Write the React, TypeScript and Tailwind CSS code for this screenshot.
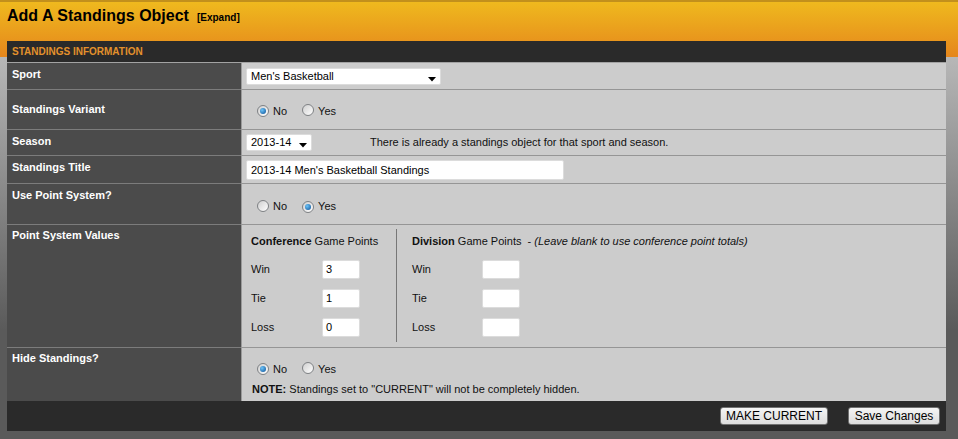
import React from 'react';

const Radio = ({ checked = false }: { checked?: boolean }) => (
  <span className="inline-flex h-[12px] w-[12px] shrink-0 items-center justify-center rounded-full border border-[#7e8184] bg-[linear-gradient(135deg,#cfcfcf,#ffffff)]">
    {checked && (
      <span className="h-[6px] w-[6px] rounded-full bg-[radial-gradient(circle_at_35%_35%,#6cc4f8,#0b4f96)]" />
    )}
  </span>
);

const YesNo = ({ yes = false }: { yes?: boolean }) => (
  <div className="flex h-[12px] items-center pl-[15px]">
    <Radio checked={!yes} />
    <span className="ml-[4px]">No</span>
    <span className="ml-[15px]">
      <Radio checked={yes} />
    </span>
    <span className="ml-[4px]">Yes</span>
  </div>
);

const Select = ({ value, width }: { value: string; width: string }) => (
  <div
    className={`flex h-[17px] items-center justify-between rounded-[2px] border border-[#dcdcdc] bg-white pl-[4px] pr-[4px] text-[11px] text-black ${width}`}
  >
    <span>{value}</span>
    <svg width="8" height="5" viewBox="0 0 8 5" className="mt-[5px]">
      <path d="M0 0h8L4 4.5z" fill="#000" />
    </svg>
  </div>
);

const PointInput = ({ value = '' }: { value?: string }) => (
  <div className="flex h-[19px] w-[38px] items-center rounded-[2px] border border-[#dcdcdc] bg-white pl-[3px] text-[11px] text-black">
    {value}
  </div>
);

const Row = ({
  label,
  height,
  labelPad,
  first = false,
  children,
}: {
  label: string;
  height: string;
  labelPad: string;
  first?: boolean;
  children: React.ReactNode;
}) => (
  <div className={`flex ${height}`}>
    <div
      className={`w-[234px] shrink-0 bg-[#4b4b4b] pl-[5px] text-[11px] font-bold leading-[13px] text-white ${labelPad} ${
        first ? '' : 'border-t border-[#7c7c7c]'
      }`}
    >
      {label}
    </div>
    <div
      className={`flex-1 border-l border-[#9a9a9a] bg-[#cccccc] text-[11px] leading-[13px] text-[#111] ${
        first ? '' : 'border-t border-t-[#959595]'
      }`}
    >
      {children}
    </div>
  </div>
);

const PointBlock = ({
  values,
  labelWidth,
}: {
  values: string[];
  labelWidth: string;
}) => (
  <>
    {['Win', 'Tie', 'Loss'].map((name, i) => (
      <div
        key={name}
        className={`flex h-[19px] items-center ${i === 0 ? 'mt-[12px]' : 'mt-[10px]'}`}
      >
        <span className={labelWidth}>{name}</span>
        <PointInput value={values[i]} />
      </div>
    ))}
  </>
);

export default function App() {
  return (
    <div className="h-screen min-h-[439px] bg-[linear-gradient(to_bottom,#b7b7b7_57px,#5a5a5a_330px)] font-['Liberation_Sans',Arial,sans-serif]">
      {/* Header */}
      <div className="h-[57px] border-t-2 border-[#c2901c] bg-[linear-gradient(to_bottom,#efb91e,#e5861c)] pl-[7px] pt-[4px]">
        <div className="flex items-baseline">
          <h1 className="text-[16px] font-bold leading-[20px] text-black">
            Add A Standings Object
          </h1>
          <span className="ml-[8px] text-[10px] font-bold text-black">[Expand]</span>
        </div>
      </div>

      {/* Panel */}
      <div className="relative -mt-[16px] ml-[7px] mr-[12px]">
        <div className="flex h-[22px] items-center border-b border-[#a3a3a3] bg-[#2a2a2a] pl-[5px] text-[10px] font-bold text-[#e3912c]">
          STANDINGS INFORMATION
        </div>

        <Row label="Sport" height="h-[26px]" labelPad="pt-[5px]" first>
          <div className="pl-[4px] pt-[5px]">
            <Select value="Men's Basketball" width="w-[195px]" />
          </div>
        </Row>

        <Row label="Standings Variant" height="h-[40px]" labelPad="pt-[13px]">
          <div className="pt-[15px]">
            <YesNo />
          </div>
        </Row>

        <Row label="Season" height="h-[26px]" labelPad="pt-[5px]">
          <div className="flex items-center pl-[4px] pt-[4px]">
            <Select value="2013-14" width="w-[66px]" />
            <span className="ml-[58px]">
              There is already a standings object for that sport and season.
            </span>
          </div>
        </Row>

        <Row label="Standings Title" height="h-[28px]" labelPad="pt-[5px]">
          <div className="pl-[4px] pt-[4px]">
            <div className="flex h-[20px] w-[318px] items-center rounded-[2px] border border-[#dcdcdc] bg-white pl-[4px] text-[11px] text-black">
              2013-14 Men's Basketball Standings
            </div>
          </div>
        </Row>

        <Row label="Use Point System?" height="h-[41px]" labelPad="pt-[5px]">
          <div className="pt-[16px]">
            <YesNo yes />
          </div>
        </Row>

        <Row label="Point System Values" height="h-[123px]" labelPad="pt-[4px]">
          <div className="flex pl-[9px] pt-[4px]">
            <div className="h-[113px] w-[146px] border-r border-[#777777] pt-[6px]">
              <div>
                <span className="font-bold">Conference</span> Game Points
              </div>
              <PointBlock values={['3', '1', '0']} labelWidth="w-[71px]" />
            </div>
            <div className="pl-[15px] pt-[6px]">
              <div className="whitespace-pre">
                <span className="font-bold">Division</span> Game Points  -{' '}
                <i>(Leave blank to use conference point totals)</i>
              </div>
              <PointBlock values={['', '', '']} labelWidth="w-[70px]" />
            </div>
          </div>
        </Row>

        <Row label="Hide Standings?" height="h-[54px]" labelPad="pt-[4px]">
          <div className="pt-[15px]">
            <YesNo />
            <div className="mt-[8px] pl-[10px]">
              <span className="font-bold">NOTE:</span> Standings set to "CURRENT" will not be
              completely hidden.
            </div>
          </div>
        </Row>

        {/* Footer */}
        <div className="flex h-[30px] items-start justify-end gap-[20px] bg-[#2a2a2a] pr-[6px] pt-[6px]">
          <button className="flex h-[18px] w-[108px] items-center justify-center rounded-[3px] border border-[#707070] bg-[linear-gradient(to_bottom,#f4f4f4,#dcdcdc)] text-[12px] text-black">
            MAKE CURRENT
          </button>
          <button className="flex h-[18px] w-[92px] items-center justify-center rounded-[3px] border border-[#707070] bg-[linear-gradient(to_bottom,#f4f4f4,#dcdcdc)] text-[12px] text-black">
            Save Changes
          </button>
        </div>
      </div>
    </div>
  );
}
